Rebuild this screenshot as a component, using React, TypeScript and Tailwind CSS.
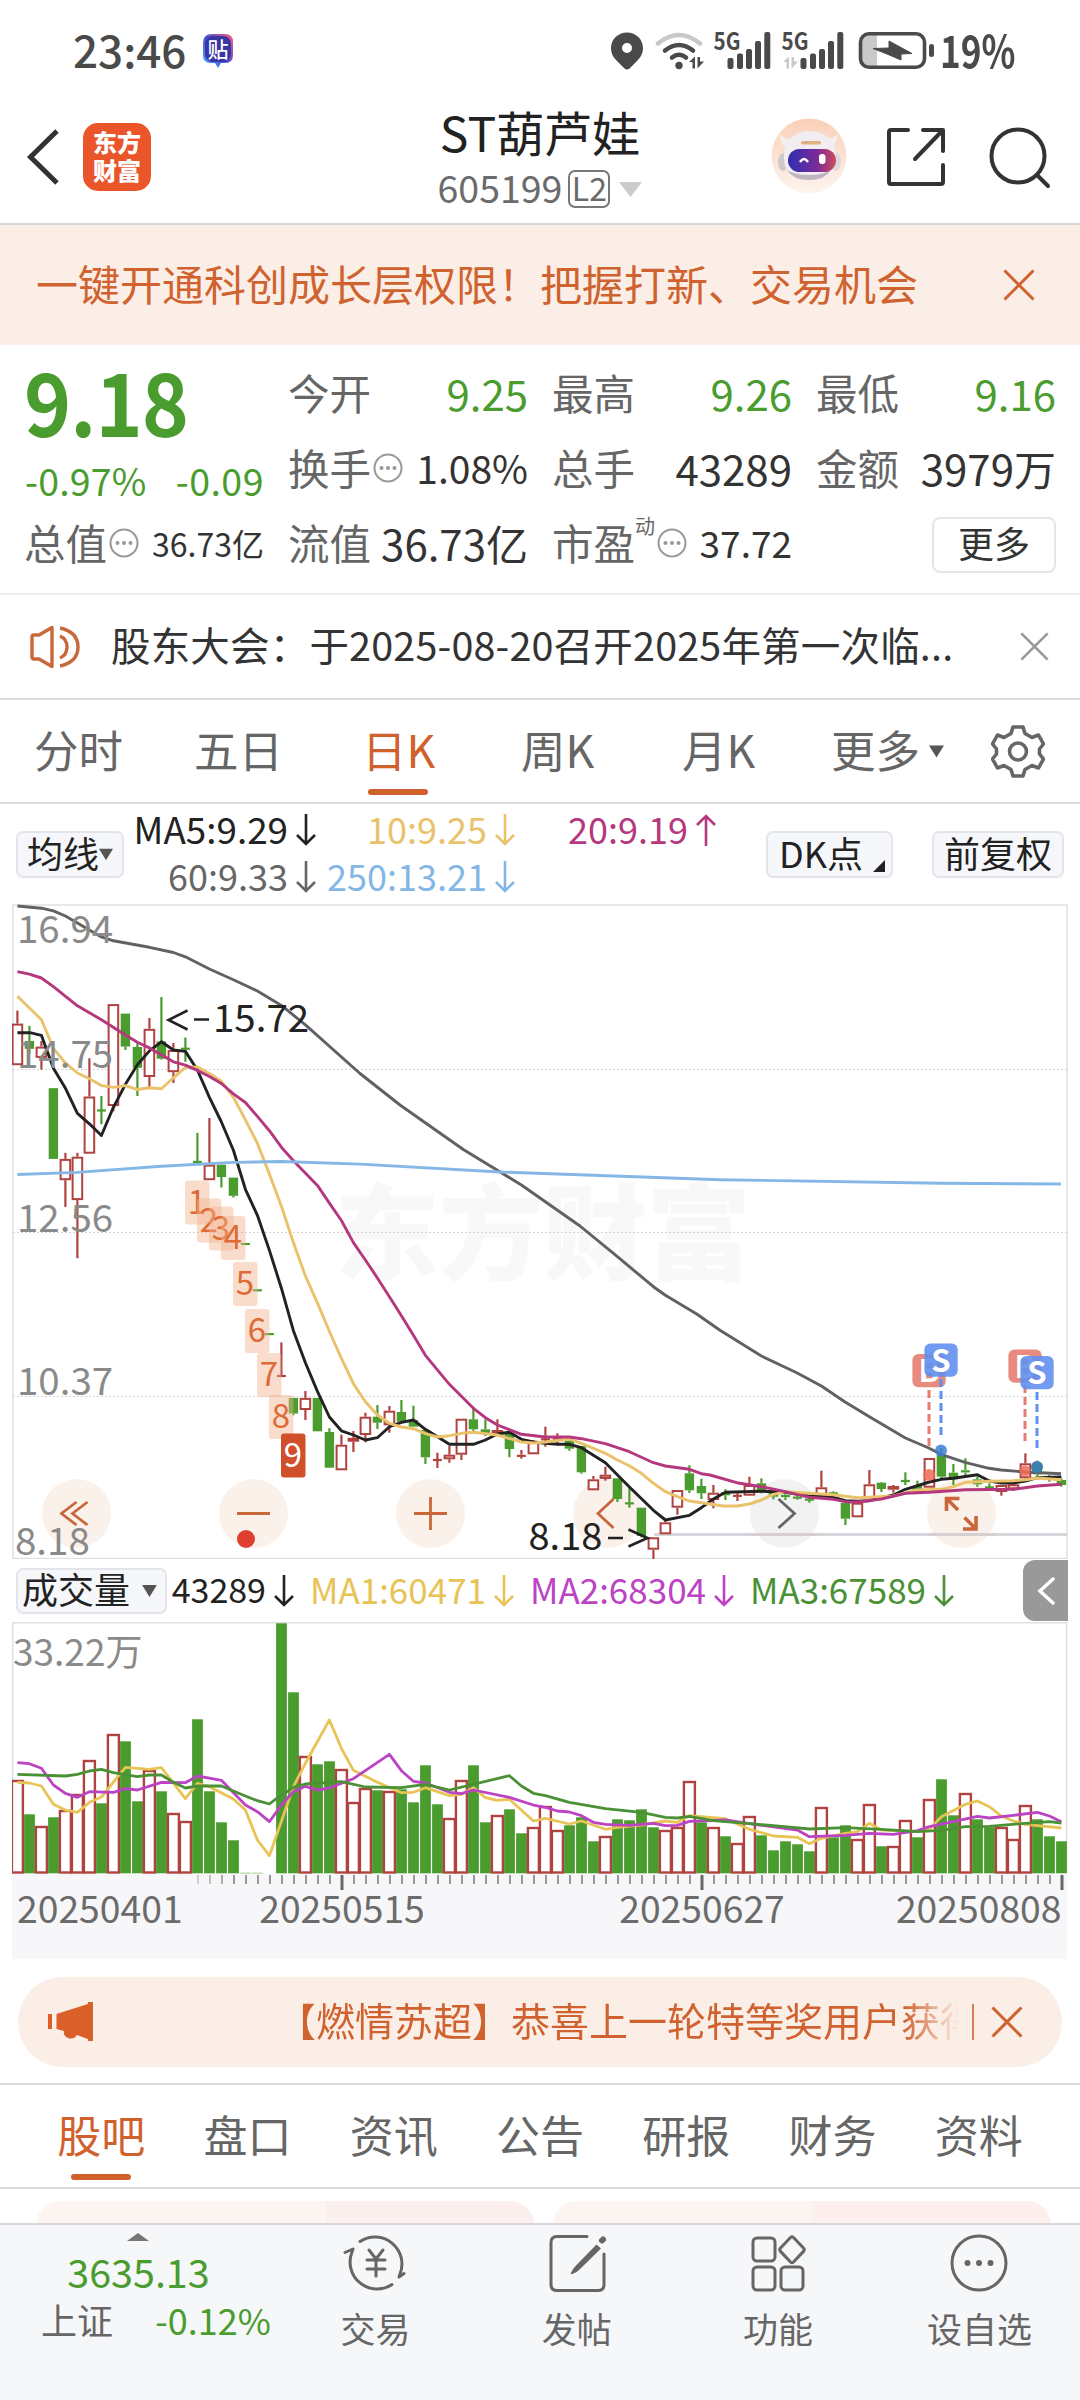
import type { ReactNode } from "react";

type Point = [number, number];

const GREEN = "#4a9c2f";
const RED = "#b04340";

// Candle slots are 12px apart, the first one centred at x = 17.4
const slotX = (i: number) => 17.4 + i * 12;

// [up, high, bodyTop, bodyBottom, low]
const candles: [number, number, number, number, number][] = [
  [1, 1010.6, 1023.6, 1065.2, 1065.2], [0, 1025.8, 1041, 1048.8, 1054], [1, 1041, 1046.6, 1057.9, 1069.6],
  [0, 1088.2, 1088.2, 1158.9, 1158.9], [1, 1152.8, 1158.9, 1180.2, 1207], [1, 1152.8, 1156.7, 1200.1, 1258.2],
  [1, 1058.3, 1096.5, 1153.7, 1153.7], [0, 1096, 1110, 1111, 1124.2], [1, 1004.1, 1004.1, 1106, 1111.2],
  [0, 1013.6, 1013.6, 1046.6, 1050], [0, 1043, 1047, 1067.8, 1096], [1, 1018, 1028.8, 1077, 1087.4],
  [0, 997, 1041.4, 1058.7, 1059.6], [1, 1043, 1050, 1072.2, 1083], [0, 1037.5, 1048.3, 1049.2, 1061.8],
  [0, 1132.9, 1161, 1162.8, 1162.8], [1, 1118, 1164.6, 1180.2, 1180.2], [0, 1164.6, 1164.6, 1177, 1187.5],
  [0, 1177.6, 1177.6, 1195.8, 1197.5], [0, 1243, 1243.3, 1244.7, 1245], [0, 1289.5, 1289.6, 1291, 1291],
  [0, 1333.4, 1333.4, 1334.8, 1334.8], [1, 1342.4, 1375.3, 1376.7, 1376.7], [0, 1397.9, 1397.9, 1413.5, 1415.2],
  [1, 1391, 1397.9, 1410, 1420], [0, 1397.9, 1397.9, 1431.3, 1431.3], [0, 1428.2, 1432, 1467.7, 1467.7],
  [1, 1434.7, 1444.7, 1470.3, 1470.3], [1, 1431, 1437.8, 1441.7, 1452], [1, 1412.7, 1416.7, 1435, 1442.3],
  [0, 1405, 1416.7, 1422.7, 1429], [1, 1406, 1410.7, 1425.3, 1432.7], [0, 1400, 1412, 1421.7, 1423.3],
  [0, 1405.7, 1420, 1426.7, 1426.7], [0, 1430, 1430, 1457.3, 1464], [1, 1452.7, 1459.7, 1460.3, 1468],
  [1, 1446, 1454.7, 1459.3, 1462.7], [1, 1418.7, 1418.7, 1454.7, 1460], [0, 1406.7, 1419.3, 1429.3, 1433.3],
  [0, 1419.3, 1429.3, 1433.3, 1436], [1, 1419.3, 1430, 1434, 1435], [0, 1433.3, 1433.3, 1449, 1457.3],
  [1, 1450, 1454.7, 1457, 1458.7], [1, 1440, 1442, 1454.3, 1454.3], [1, 1426.7, 1439, 1439.7, 1446.7],
  [1, 1433.3, 1438.7, 1439.3, 1445], [0, 1440, 1440.7, 1448.7, 1450.7], [0, 1446, 1446, 1472.3, 1473.7],
  [1, 1476, 1479.3, 1490.3, 1490.3], [1, 1466.7, 1474.7, 1479, 1480.7], [0, 1478.3, 1478.3, 1499, 1502],
  [0, 1488.3, 1502.7, 1504, 1507.7], [0, 1507.7, 1507.7, 1536, 1537.3], [1, 1537.3, 1537.3, 1549.7, 1560],
  [1, 1520.7, 1522.3, 1534.3, 1534.3], [1, 1490, 1490, 1507.7, 1514.7], [0, 1465.3, 1473.3, 1490.3, 1493],
  [0, 1478.7, 1486, 1493.3, 1499], [1, 1485, 1492.7, 1500, 1508.3], [0, 1489.3, 1492.3, 1495.3, 1500],
  [1, 1493.3, 1495, 1496.7, 1501], [1, 1476.7, 1485, 1495.7, 1495.7], [0, 1478.3, 1483.3, 1490.7, 1493.3],
  [0, 1490, 1492.7, 1496.7, 1499.3], [0, 1492.7, 1494.7, 1497.3, 1500], [0, 1493.3, 1496.7, 1498.7, 1499.7],
  [0, 1496.7, 1499, 1500.3, 1502.7], [1, 1470.7, 1487.3, 1496.7, 1496.7], [0, 1491.3, 1492.7, 1494, 1496],
  [0, 1501.7, 1502.7, 1518.7, 1525], [1, 1502.7, 1502.7, 1517.3, 1517.3], [1, 1470, 1484.3, 1498.3, 1498.3],
  [0, 1482, 1482.7, 1489, 1492], [1, 1485, 1486, 1489.7, 1492.7], [0, 1472.3, 1480, 1482, 1485],
  [0, 1480.7, 1486, 1492, 1492], [1, 1458, 1458, 1487.7, 1487.7], [0, 1448, 1455, 1476.7, 1478.3],
  [0, 1464, 1472.7, 1479.3, 1485], [0, 1458.3, 1470, 1472.7, 1475], [0, 1476.7, 1479.3, 1484.3, 1486.7],
  [0, 1483.3, 1486.7, 1488, 1490.7], [1, 1485, 1485, 1492, 1495.7], [1, 1483.3, 1484.3, 1489.3, 1490.7],
  [1, 1453.3, 1463.3, 1478.3, 1481.7], [0, 1460.7, 1463.3, 1474.3, 1476.7], [0, 1475, 1476.7, 1480, 1481.7],
  [0, 1478.3, 1480, 1485, 1486.7],
];

const priceLines = [
  {
    color: "#616161",
    points:
      "17.4,906 41.4,908.2 53.4,910.8 65.4,916 101.4,936.9 113.4,940.8 149.4,947.3 173.4,952.5 185.4,956.8 209.4,969 233.4,979.8 257.4,991 281.4,1005.4 305.4,1024.9 360,1073.5 400,1105 463.3,1149.5 521.4,1185 580,1226 617.4,1256.7 653.4,1286.7 665.4,1295.3 696.7,1314 720,1330.3 761.4,1356 796.7,1372.7 821.4,1386 844.7,1401.7 869.4,1416.7 905.4,1438 928.7,1448 941,1454.3 965,1462.3 989,1468.3 1001,1470 1025,1472 1061,1473.7",
  },
  {
    color: "#222",
    points:
      "17.4,1032.7 30,1032.7 41.4,1035.3 53.4,1068.3 65,1087.4 77.4,1113.4 89.4,1123.8 101.4,1135.5 113.4,1107.3 125.4,1084.3 137.4,1064.8 149.4,1050.9 161.4,1041.8 173.4,1050 185.4,1051.4 197.4,1070 209.4,1097.3 221.4,1122 233.4,1150.2 245.4,1189.3 257.4,1215.3 269.4,1250.4 281.4,1288.2 293.4,1330.7 305.4,1362.8 317.4,1391.4 329.4,1417 341.4,1430.8 353.4,1435 365.4,1440 377.4,1437.7 389.4,1426.7 401.4,1422.3 413.4,1420 425.4,1429.3 437.4,1436.7 449.4,1444.3 473.4,1444.3 485.4,1440 497.4,1434 509.4,1432.3 521.4,1439.3 533.4,1442 545.4,1443.3 557.4,1444.3 569.4,1444.3 581.4,1447.7 605.4,1462.7 629.4,1487 653.4,1510.3 665.4,1520 689.4,1515.3 701.4,1507.7 713.4,1499 725.4,1492.3 761.4,1491.3 785.4,1492.3 809.4,1496 833.4,1497.3 845.4,1500.7 857.4,1501.3 869.4,1500.7 893.4,1495 905.4,1489.3 929.4,1482 941.4,1479.3 953.4,1478.3 977.4,1474.7 989.4,1481 1001.4,1483 1013.4,1483 1025.4,1481 1037.4,1477.7 1061.4,1477",
  },
  {
    color: "#e9c26b",
    points:
      "17.4,996.3 41.4,1019.7 53.4,1048.3 65,1062.6 77.4,1073 89.4,1078.7 101.4,1085.6 113.4,1087.4 125.4,1085.6 137.4,1089.5 149.4,1087.8 161.4,1088.7 173.4,1077.8 185.4,1067.4 197.4,1067 209.4,1073.5 221.4,1081.3 233.4,1097.3 245.4,1119.9 257.4,1143.3 269.4,1174.1 281.4,1206.2 293.4,1242.6 305.4,1276 317.4,1302.9 329.4,1331.5 341.4,1358.4 353.4,1383.6 365.4,1401.7 377.4,1415 389.4,1423.3 401.4,1427 413.4,1428.7 425.4,1433.7 437.4,1437 449.4,1435.7 461.4,1433.3 473.4,1432.3 497.4,1435 521.4,1442 533.4,1443 545.4,1442 569.4,1439 581.4,1443.3 605.4,1453.3 617.4,1460 629.4,1465.7 641.4,1473.3 653.4,1483.3 665.4,1491.7 677.4,1496.7 689.4,1501 701.4,1502.7 723.4,1506 737.4,1506 749.4,1504 761.4,1500 773.4,1494.3 785.4,1491.7 809.4,1493.3 833.4,1494.7 857.4,1497.7 869.4,1497.3 893.4,1496 917.4,1490 941.4,1489.3 953.4,1486.7 965.4,1482.3 989.4,1481.3 1013.4,1480.7 1025.4,1479.7 1037.4,1478 1061.4,1479.7",
  },
  {
    color: "#b5387f",
    points:
      "17.4,971.6 29.4,974.2 41.4,978 53.4,986.7 77.4,1005.8 101.4,1019.7 125.4,1034.9 137.4,1042.3 149.4,1047.9 173.4,1061.8 185.4,1065.2 197.4,1070.4 209.4,1076.5 221.4,1083.5 233.4,1093.9 245.4,1102.5 257.4,1116.4 269.4,1130.7 281.4,1147.2 293.4,1160.7 317.4,1185.4 329.4,1203.1 341.4,1220.5 353.4,1242.6 365.4,1260 377.4,1278 389.4,1296.7 401.4,1315.7 413.4,1335.3 425.4,1355.3 449.4,1384.3 473.4,1408.3 485.4,1417.7 497.4,1425 521.4,1434.3 545.4,1437 569.4,1437 581.4,1438.7 605.4,1443.7 629.4,1451.7 653.4,1462.7 665.4,1466 689.4,1469.3 701.4,1473.7 710,1475 736.7,1482.7 761.4,1486.7 785.4,1491.7 809.4,1497.3 833.4,1499.3 845.4,1501.7 857.4,1502 881.4,1499 905.4,1493.3 929.4,1492.3 965.4,1489.7 1013.4,1489.3 1037.4,1486 1061.4,1484.3",
  },
  {
    color: "#84b7e6",
    points:
      "17.4,1174.5 77,1172.4 161.4,1166.3 233.4,1162.4 281.4,1161.5 360,1164.1 500,1172 720,1179.7 941,1183.3 1061,1184",
  },
];

const volumes = [
  93, 59, 47, 56, 63, 79, 113, 70, 139, 132, 72, 103, 82, 60, 52, 154, 82, 51, 33, 0.5, 0.5, 0, 250, 181, 117, 109,
  112, 104, 71, 85, 83, 82, 84, 71, 108, 69, 55, 93, 108, 51, 58, 64, 40, 46, 67, 43, 48, 56, 32, 37, 54, 53, 64, 46,
  43, 46, 92, 51, 46, 37, 30, 57, 38, 23, 32, 29, 22, 66, 36, 48, 34, 69, 27, 27, 53, 36, 74, 94, 58, 80, 54, 46, 46,
  34, 68, 54, 37, 32,
];
const upVolumes = new Set([
  0, 2, 4, 5, 6, 8, 11, 13, 14, 24, 27, 28, 29, 31, 36, 37, 40, 43, 44, 45, 49, 54, 55, 56, 58, 60, 61, 67, 70, 71, 73,
  74, 76, 79, 82, 83, 84,
]);

const volumeLines: { color: string; points: Point[] }[] = [
  {
    color: "#e8c355",
    points: [
      [0, 1782.3], [1, 1783], [2, 1786], [3, 1804.3], [4, 1810], [5, 1812.3], [6, 1802.3], [7, 1797], [9, 1767.3],
      [11, 1769.3], [12, 1767.7], [14, 1798.7], [15, 1783.3], [16, 1786.7], [18, 1799], [19, 1810], [20, 1840],
      [21, 1855.7], [23, 1786.7], [24, 1763.3], [26, 1720], [27, 1748.3], [28, 1770.3], [30, 1782.3], [32, 1792.7],
      [33, 1792.3], [34, 1787.7], [36, 1795.7], [37, 1794.3], [38, 1787.7], [39, 1797.7], [40, 1800.3], [41, 1799.3],
      [43, 1821], [44, 1818.3], [46, 1824], [47, 1821], [49, 1829.3], [50, 1827.3], [52, 1825], [54, 1821],
      [55, 1822.3], [56, 1815.7], [58, 1817.7], [59, 1818.7], [61, 1829.3], [63, 1836], [65, 1837.3], [66, 1843.7],
      [67, 1838.3], [69, 1833.3], [70, 1831.7], [71, 1823.3], [72, 1830], [75, 1831.7], [76, 1829], [77, 1816.7],
      [79, 1804.3], [80, 1801], [81, 1806.7], [82, 1816], [83, 1821], [84, 1824.3], [87, 1828],
    ],
  },
  {
    color: "#bb43c4",
    points: [
      [0, 1762.7], [1, 1763.7], [2, 1768.3], [3, 1785], [4, 1793.3], [5, 1797.3], [6, 1791.7], [8, 1792.3],
      [9, 1788.7], [10, 1790], [12, 1782.3], [14, 1782.7], [15, 1776], [17, 1780.3], [19, 1805], [20, 1811.7],
      [21, 1821.7], [22, 1805], [23, 1791.7], [24, 1786.3], [25, 1790], [26, 1788], [28, 1778.7], [31, 1754.3],
      [32, 1770.7], [33, 1781.3], [34, 1783], [36, 1792.3], [37, 1793.7], [38, 1790], [41, 1797.3], [43, 1805],
      [44, 1807.3], [45, 1811], [46, 1812], [47, 1815.7], [48, 1822.3], [49, 1824.3], [51, 1825.3], [53, 1823.3],
      [54, 1825.7], [55, 1825.3], [56, 1821.3], [59, 1820], [62, 1825.3], [65, 1830], [66, 1836.7], [69, 1835.3],
      [71, 1833.3], [73, 1834.3], [75, 1830.7], [76, 1826.7], [78, 1821.7], [80, 1816.3], [81, 1818], [83, 1815.3],
      [85, 1812.3], [86, 1816], [87, 1821.7],
    ],
  },
  {
    color: "#4a9136",
    points: [
      [0, 1774.3], [4, 1776], [5, 1774.3], [6, 1771], [7, 1769.3], [8, 1772.7], [10, 1776.7], [11, 1775], [12, 1775],
      [13, 1782.3], [14, 1788], [15, 1786], [17, 1786], [19, 1796], [20, 1800.7], [21, 1804], [21.5, 1799.3],
      [23, 1787.3], [24, 1784], [27, 1781.7], [29, 1787], [32, 1787.7], [34, 1784.3], [36, 1790], [41, 1775.7],
      [42, 1786], [43, 1793.3], [44, 1795.7], [46, 1802.3], [49, 1808.7], [52, 1812.3], [54, 1817.3], [55, 1818],
      [56, 1816.3], [58, 1820.7], [61, 1823.7], [63, 1825.7], [66, 1829], [69, 1827.7], [72, 1829.3], [75, 1831.7],
      [77, 1830.3], [79, 1826.7], [81, 1826.3], [84, 1823.3], [86, 1821.7], [87, 1823],
    ],
  },
];

// Nine-turn sequence markers: top left corner of each tag
const sequence: Point[] = [
  [185, 1180.5], [197, 1198.5], [209, 1206.5], [221, 1216], [233, 1262], [245, 1309], [257, 1353], [269, 1395],
  [281, 1433.5],
];

function StatusBar() {
  return (
    <div className="flex h-[102px] items-center pl-[73px] text-[#4a4a4a]">
      <span className="relative -top-0.5 text-[44px] leading-none font-medium">23:46</span>
      <svg className="ml-[16px] h-[36px] w-[32px]" viewBox="0 0 32 36">
        <defs>
          <linearGradient id="tie" x1="0" y1="1" x2="1" y2="0">
            <stop offset="0" stopColor="#38b4ff" />
            <stop offset="0.5" stopColor="#4a4fd0" />
            <stop offset="1" stopColor="#ff5d7a" />
          </linearGradient>
        </defs>
        <path d="M10 1h13q8 0 8 8v13q0 8-8 8h-4l-3 5-3-5H9q-8 0-8-8V10q0-9 9-9z" fill="url(#tie)" />
        <rect x="3" y="3" width="26" height="26" rx="8" fill="#3a35a5" />
        <text x="16" y="24" fontSize="21" fontWeight="500" textAnchor="middle" fill="#fff">
          贴
        </text>
      </svg>
      <svg className="ml-[375px] h-[40px] w-[326px]" viewBox="610 31 326 40">
        <g fill="#4a4a4a">
          <path fillRule="evenodd" d="M628 32.5c9 0 16 7 16 15.500 0 6-3 10-6 13l-7.500 7.500q-2.500 2.200-5 0L618 61c-3-3-6-7-6-13 0-8.500 7-15.500 16-15.500zm0 10.500a5 5 0 1 0 0 10 5 5 0 0 0 0-10z" />
          <circle cx="680" cy="65.500" r="3.700" />
          <path d="M690 62l6-5.500v12h-2.500V62zM698.500 57h2.500v4.500h4l-6.500 7z" />
          <rect x="728.500" y="58" width="6" height="11" rx="2" />
          <rect x="738" y="53.500" width="6" height="15.500" rx="2" />
          <rect x="747" y="49" width="6" height="20" rx="2" />
          <rect x="756" y="41" width="6" height="28" rx="2" />
          <rect x="765.300" y="32" width="6" height="37" rx="2" />
          <rect x="801.500" y="58" width="6" height="11" rx="2" />
          <rect x="811" y="53.500" width="6" height="15.500" rx="2" />
          <rect x="820" y="49" width="6" height="20" rx="2" />
          <rect x="829" y="41" width="6" height="28" rx="2" />
          <rect x="838.300" y="32" width="6" height="37" rx="2" />
          <text x="714.500" y="50" fontSize="24" fontWeight="700" textLength="27" lengthAdjust="spacingAndGlyphs">5G</text>
          <text x="782.500" y="50" fontSize="24" fontWeight="700" textLength="27" lengthAdjust="spacingAndGlyphs">5G</text>
          <rect x="930" y="44" width="5" height="13" rx="2.500" />
        </g>
        <g fill="none" strokeWidth="4.500" strokeLinecap="round">
          <path d="M659 43.500q21-17 42 0" stroke="#c9c9c9" />
          <path d="M666 50.500q14-11 28 0" stroke="#4a4a4a" />
          <path d="M673 57.500q7-5.500 14 0" stroke="#4a4a4a" />
        </g>
        <path d="M784 62l6-5.500v12h-2.500V62zM792.500 57h2.500v4.500h4l-6.500 7z" fill="#c9c9c9" />
        <path d="M863 35h15v31h-15z" fill="#c9c9c9" />
        <rect x="861.500" y="33.700" width="64" height="33.600" rx="8.500" fill="none" stroke="#4a4a4a" strokeWidth="3.600" />
        <path d="M874 48.500l16-0.500v-7l23 12.500-11 .5v6l-14-6z" fill="#4a4a4a" stroke="#4a4a4a" strokeLinejoin="round" />
      </svg>
      <span className="relative -top-0.5 ml-[5px] origin-left scale-x-[0.8] text-[44px] leading-none font-bold">19%</span>
    </div>
  );
}

function Header() {
  return (
    <header className="relative flex h-[123px] items-center border-b-2 border-[#d6d6d9] pl-[26px]">
      <svg className="mt-[-12px] h-[58px] w-[34px]" viewBox="0 0 34 58" fill="none" stroke="#333" strokeWidth="5">
        <path d="M31 3L4.500 29 31 55" />
      </svg>
      <div className="mt-[-12px] ml-[23px] flex h-[68px] w-[68px] flex-col items-center justify-center rounded-[15px] bg-[#ea5529] text-[24px] leading-[28px] font-black text-white">
        <span className="-mt-0.5">东方</span>
        <span>财富</span>
      </div>
      <div className="absolute inset-x-0 top-0 flex flex-col items-center">
        <h1 className="mt-[5px] text-[48px] leading-none text-[#222]">ST葫芦娃</h1>
        <div className="mt-[15px] flex items-center text-[37.500px] leading-none text-[#6b6b6b]">
          <span className="relative -top-0.5">605199</span>
          <span className="ml-[6px] flex h-[38px] w-[42px] items-center justify-center rounded-[7px] border-2 border-[#777] pb-1 text-[32px]">L2</span>
          <svg className="ml-[9px] h-[15px] w-[23px]" viewBox="0 0 23 15">
            <path d="M0 0h23L11.500 15z" fill="#ccc" />
          </svg>
        </div>
      </div>
      <svg className="mt-[-13px] ml-[620px] h-[76px] w-[76px]" viewBox="0 0 76 76">
        <defs>
          <linearGradient id="halo" x1="0" y1="0" x2="0" y2="1">
            <stop offset="0" stopColor="#fad0b8" />
            <stop offset="1" stopColor="#fdf4ef" />
          </linearGradient>
          <linearGradient id="visor">
            <stop offset="0" stopColor="#2f2fb0" />
            <stop offset="0.600" stopColor="#7a2a9a" />
            <stop offset="1" stopColor="#d04a5c" />
          </linearGradient>
        </defs>
        <circle cx="38" cy="38" r="37.500" fill="url(#halo)" />
        <path d="M9 16q0 9 5 13l7-7q-9-1-12-6zM67 15q-1 9-5 13l-8-7q10 0 13-6z" fill="#f5efee" />
        <ellipse cx="12" cy="44" rx="5" ry="9" fill="#cfc8cc" />
        <ellipse cx="65" cy="44" rx="5" ry="9" fill="#ddd6da" />
        <path d="M13 40q0-26 25-27 27 1 27 27 0 21-27 22-25-1-25-22z" fill="#f1edf0" />
        <path d="M16 52q6 10 22 10t22-10q-8 5-22 5t-22-5z" fill="#bdb6c1" />
        <rect x="17" y="31" width="48" height="23" rx="11.500" fill="url(#visor)" />
        <rect x="30" y="23" width="20" height="3.500" rx="1.700" fill="#dfb184" />
        <path d="M29 44q4-6 8 0" stroke="#fff" strokeWidth="2.500" fill="none" />
        <rect x="48" y="36" width="6.500" height="10" rx="3" fill="#fff" />
      </svg>
      <svg className="mt-[-12px] ml-[39px] h-[60px] w-[60px]" viewBox="0 0 60 60" fill="none" stroke="#333" strokeWidth="4" strokeLinecap="round" strokeLinejoin="round">
        <path d="M22 3H5q-2 0-2 2v50q0 2 2 2h50q2 0 2-2V38" />
        <path d="M37 3h20v21M56 4L29 32" />
      </svg>
      <svg className="mt-[-9px] ml-[43px] h-[62px] w-[62px]" viewBox="0 0 62 62" fill="none" stroke="#333" strokeWidth="4" strokeLinecap="round">
        <circle cx="29" cy="29" r="26.500" />
        <path d="M48.500 48.500L59 59" />
      </svg>
    </header>
  );
}

function Cross({ className }: { className: string }) {
  return (
    <svg className={className} viewBox="0 0 32 32" fill="none" stroke="currentColor" strokeWidth="3">
      <path d="M1.500 1.500l29 29M30.500 1.500l-29 29" />
    </svg>
  );
}

function MoreDots() {
  return (
    <svg className="ml-[2px] h-[30px] w-[30px] shrink-0" viewBox="0 0 30 30">
      <circle cx="15" cy="15" r="13.500" fill="none" stroke="#999" strokeWidth="2" />
      <g fill="#999">
        <circle cx="8.500" cy="15" r="2" />
        <circle cx="15" cy="15" r="2" />
        <circle cx="21.500" cy="15" r="2" />
      </g>
    </svg>
  );
}

function Quote({ label, children, icon, sup }: { label: string; children: ReactNode; icon?: boolean; sup?: string }) {
  return (
    <div className="relative flex items-center justify-between pb-1 text-[42px] leading-none whitespace-nowrap">
      <span className="-ml-0.5 flex items-center text-[41.500px] text-[#666]">
        {label}
        {sup && <sup className="relative -top-[17px] ml-0 w-[20px] text-[20px] leading-none">{sup}</sup>}
        {icon && <MoreDots />}
      </span>
      {children}
    </div>
  );
}

function QuotePanel() {
  return (
    <section className="grid h-[250px] grid-cols-4 grid-rows-[75px_75px_75px] gap-x-[26px] border-b-2 border-[#eee] pt-[12px] pr-6 pl-[26px] text-[#333]">
      <div className="row-span-2 text-[#4a9c2f]">
        <div className="-mt-px ml-[-2px] origin-left scale-x-[0.92] text-[87px] leading-none font-bold tracking-[-1px]">9.18</div>
        <div className="mt-[18px] flex justify-between text-[37.500px] leading-none">
          <span className="-ml-px tracking-[0.2px]">-0.97%</span>
          <span className="tracking-[0.5px]">-0.09</span>
        </div>
      </div>
      <Quote label="今开"><span className="text-[#4a9c2f]">9.25</span></Quote>
      <Quote label="最高"><span className="text-[#4a9c2f]">9.26</span></Quote>
      <Quote label="最低"><span className="text-[#4a9c2f]">9.16</span></Quote>
      <Quote label="换手" icon><span className="text-[39px]">1.08%</span></Quote>
      <Quote label="总手"><span>43289</span></Quote>
      <Quote label="金额"><span>3979万</span></Quote>
      <Quote label="总值" icon><span className="text-[32px]">36.73亿</span></Quote>
      <Quote label="流值"><span>36.73亿</span></Quote>
      <Quote label="市盈" icon sup="动"><span className="text-[37px]">37.72</span></Quote>
      <div className="flex items-center justify-end">
        <button className="h-[56px] w-[124px] rounded-lg border-2 border-[#e6e6e6] pb-1.5 text-[36px] leading-none">更多</button>
      </div>
    </section>
  );
}

function Notice() {
  return (
    <div className="flex h-[105px] items-center border-b-2 border-[#d9d9d9] pr-[31px] pl-[29px]">
      <svg className="h-[44px] w-[52px]" viewBox="0 0 52 44" fill="none" stroke="#c9673a" strokeWidth="3.400">
        <path d="M3 12q0-2 2-2h5L23 2.500v39L10 34H5q-2 0-2-2z" strokeLinejoin="round" />
        <path d="M31 11q7 3 7 11t-7 11" />
        <path d="M31 3q18 4 18 19T31 41" />
      </svg>
      <p className="ml-[30px] pb-1.5 text-[39.500px] leading-none tracking-[0.180px] whitespace-nowrap text-[#333]">
        股东大会：于2025-08-20召开2025年第一次临...
      </p>
      <Cross className="ml-auto h-[29px] w-[29px] text-[#999]" />
    </div>
  );
}

function Caret({ className }: { className: string }) {
  return (
    <svg className={className} viewBox="0 0 16 13">
      <path d="M0 0h16L8 13z" fill="#555" />
    </svg>
  );
}

function PeriodTabs() {
  return (
    <nav className="flex h-[104px] items-center border-b-2 border-[#d9d9d9] pl-[34px] text-[44.500px] leading-none whitespace-nowrap text-[#666]">
      <span className="w-[160px] pb-1">分时</span>
      <span className="w-[168px] pb-1">五日</span>
      <span className="relative w-[159px] pb-1 text-[#d0612d]">
        日K
        <i className="absolute top-[62px] left-[6px] h-[6px] w-[60px] rounded-full bg-[#d0612d]" />
      </span>
      <span className="w-[161px] pb-1">周K</span>
      <span className="w-[149px] pb-1">月K</span>
      <span className="pb-1">更多</span>
      <Caret className="ml-[9px] h-[13px] w-[15px]" />
      <svg className="ml-[47px] h-[54px] w-[54px]" viewBox="0 0 54 54" fill="none" stroke="#666" strokeWidth="3.600" strokeLinejoin="round">
        <path d="M22 3h10l2 6.500 7 4 6.500-2.500 5 9-4 5v5l4 5-5 9-6.500-2.500-7 4-2 6.500H22l-2-6.500-7-4L6.500 44l-5-9 4-5v-5l-4-5 5-9 6.500 2.500 7-4z" />
        <circle cx="27" cy="27.500" r="8.500" />
      </svg>
    </nav>
  );
}

function Arrow({ up }: { up?: boolean }) {
  return (
    <svg className="ml-[8px] h-[32px] w-[20px] shrink-0" viewBox="0 0 20 32" fill="none" stroke="currentColor" strokeWidth="2.600">
      <path d={up ? "M10 32V2M1 11l9-9 9 9" : "M10 0v30M1 21l9 9 9-9"} />
    </svg>
  );
}

function Stat({ children, up }: { children: ReactNode; up?: boolean }) {
  return (
    <span className="flex items-center justify-end whitespace-nowrap">
      <span className="relative -top-0.5">{children}</span>
      <Arrow up={up} />
    </span>
  );
}

function AverageBar() {
  return (
    <div className="relative flex h-[100px] items-start pl-4 text-[36px] leading-none text-[#222]">
      <button className="mt-[27px] flex h-[47px] w-[108px] items-center justify-center rounded-[7px] border-2 border-[#e4e5ea] bg-[#f6f7fa]">
        <span className="relative -top-[3px]">均线</span>
        <Caret className="h-[13px] w-[14px]" />
      </button>
      <div className="mt-[8px] grid grid-cols-[192px_199px_201px] grid-rows-[35px_35px] gap-y-[12px]">
        <span className="text-[36.800px]"><Stat>MA5:9.29</Stat></span>
        <span className="text-[#e9c26b]"><Stat>10:9.25</Stat></span>
        <span className="text-[#b5387f]"><Stat up>20:9.19</Stat></span>
        <span className="text-[#666]"><Stat>60:9.33</Stat></span>
        <span className="text-[#84b7e6]"><Stat>250:13.21</Stat></span>
      </div>
      <button className="mt-[27px] ml-[50px] flex h-[47px] w-[127px] items-center rounded-[7px] border-2 border-[#e4e5ea] bg-[#f6f7fa] pl-[11px]">
        <span className="relative -top-[3px]">DK点</span>
        <svg className="mt-[22px] ml-[10px] h-[12px] w-[12px]" viewBox="0 0 12 12"><path d="M12 0v12H0z" fill="#222" /></svg>
      </button>
      <button className="mt-[27px] ml-[39px] h-[47px] w-[132px] rounded-[7px] border-2 border-[#e4e5ea] bg-[#f6f7fa] pb-1.5">前复权</button>
    </div>
  );
}

function Candle({ i, data }: { i: number; data: (typeof candles)[number] }) {
  const [up, high, top, bottom, low] = data;
  const x = slotX(i);
  const thin = bottom - top < 3;
  return (
    <g stroke={up ? RED : GREEN} strokeWidth="2.200">
      {high < top && <path d={`M${x} ${high}V${top}`} />}
      {low > bottom && <path d={`M${x} ${bottom}V${low}`} />}
      {thin && <path d={`M${x - 4.500} ${(top + bottom) / 2}h9`} />}
      {!thin && up === 1 && <rect x={x - 4.800} y={top + 1} width="9.600" height={bottom - top - 2} fill="#fff" strokeWidth="2" />}
      {!thin && up === 0 && <rect x={x - 4.700} y={top} width="9.400" height={bottom - top} fill={GREEN} stroke="none" />}
    </g>
  );
}

function Badge({ x, y, letter, color, to, dashFrom }: { x: number; y: number; letter: string; color: string; to: number; dashFrom: number }) {
  return (
    <g>
      <path d={`M${x} ${dashFrom}V${to}`} stroke={color} strokeWidth="3" strokeDasharray="8 4" />
      <rect x={x - 16.600} y={y} width="33.300" height="33.300" rx="6" fill={color} fillOpacity="0.900" />
      <text x={x} y={y + 28} fontSize="31" fontWeight="700" textAnchor="middle" fill="#fff">
        {letter}
      </text>
    </g>
  );
}

function PriceChart() {
  return (
    <svg className="mx-3 block h-[655px] w-[1056px]" viewBox="12 904 1056 655">
      <rect x="13" y="905" width="1054" height="653.500" fill="#fff" stroke="#dfdfdf" strokeWidth="1.500" />
      <text x="335" y="1272" fontSize="104" fontWeight="900" fill="#f8f8f8">东方财富</text>
      <g stroke="#d4d4d4" strokeDasharray="2 2">
        <path d="M13 1069.500H1067M13 1232.500H1067M13 1396.500H1067" />
      </g>
      <path d="M654 1534.500h413" stroke="#d5d6db" strokeWidth="3" />
      {[76.500, 253.500, 430.500, 607.500, 784.500, 961.500].map((cx, i) => (
        <circle key={cx} cx={cx} cy="1513.500" r="34.500" fill={i === 4 ? "#f2f2f2" : "#fbf1eb"} />
      ))}
      <path d="M751 1534.500h67M928 1534.500h67" stroke="#d5cfd0" strokeWidth="3" />
      <g fill="none" stroke="#c9663a" strokeWidth="2.800">
        <path d="M76.500 1502l-15 11.500 15 11.500M87.500 1502l-15 11.500 15 11.500" />
        <path d="M237 1513.500h33M414 1513.500h33M430.500 1497v33" />
        <path d="M613.500 1499l-15.500 14.500 15.500 14.500" />
        <path d="M778.500 1499l16 14.500-16 14.500" stroke="#666" />
        <path d="M946.500 1511v-12.500h13M947 1499l11 11M963 1529h13v-13M975.500 1528.500l-11-11" strokeWidth="3.600" />
      </g>
      {candles.map((data, i) => (
        <Candle key={i} i={i} data={data} />
      ))}
      <g fontSize="33" textAnchor="middle">
        {sequence.map(([x, y], i) => {
          const last = i === sequence.length - 1;
          return (
            <g key={i}>
              <rect x={x} y={y} width="24.500" height="44" rx="3" fill={last ? "#d0502c" : "#f2b18f"} fillOpacity={last ? 1 : 0.450} />
              <text x={x + 12} y={y + 33} fill={last ? "#fff" : "#de6a35"}>{i + 1}</text>
            </g>
          );
        })}
      </g>
      {priceLines.map((line) => (
        <polyline key={line.color} points={line.points} fill="none" stroke={line.color} strokeWidth="2.900" strokeLinejoin="round" />
      ))}
      <circle cx="929" cy="1475" r="6" fill="#ef6a58" fillOpacity="0.850" />
      <circle cx="941" cy="1450.500" r="6" fill="#3f7fd6" fillOpacity="0.850" />
      <circle cx="1025" cy="1471" r="5.500" fill="#ef6a58" fillOpacity="0.850" />
      <circle cx="1037" cy="1467" r="6" fill="#3a80b0" />
      <Badge x={929} y={1354} letter="B" color="#e57d6f" dashFrom={1390} to={1447} />
      <Badge x={941} y={1343.500} letter="S" color="#6090f0" dashFrom={1379} to={1436} />
      <Badge x={1025} y={1349.500} letter="B" color="#e57d6f" dashFrom={1385} to={1441} />
      <Badge x={1037} y={1356} letter="S" color="#6090f0" dashFrom={1392} to={1449} />
      <g fontSize="38.500" fill="#8a8a8a">
        <text x="17" y="942.500">16.94</text>
        <text x="17" y="1068">14.75</text>
        <text x="17" y="1232">12.56</text>
        <text x="17" y="1395">10.37</text>
        <text x="15" y="1555">8.18</text>
      </g>
      <circle cx="246" cy="1539" r="9" fill="#de3f30" />
      <g fontSize="38" fill="#222">
        <text x="213" y="1031.500" fontSize="38.500">15.72</text>
        <text x="528.500" y="1550">8.18</text>
        <path d="M187.500 1010.500l-19 9.500 19 9.500M194 1019.500h15M608 1538h15M628.500 1529.500l19 8.500-19 8.500" fill="none" stroke="#222" strokeWidth="2.600" />
      </g>
    </svg>
  );
}

function VolumeBar() {
  return (
    <div className="mr-3 flex h-[63px] items-center pl-4 text-[35px] leading-none text-[#222]">
      <button className="flex h-[46px] w-[151px] items-center rounded-[7px] border-2 border-[#e4e5ea] bg-[#f6f7fa] pl-[4px] text-[36px]">
        <span className="relative -top-[3px]">成交量</span>
        <Caret className="ml-[12px] h-[12px] w-[15px]" />
      </button>
      <div className="flex w-[127px] justify-end text-[34px]"><Stat>43289</Stat></div>
      <div className="flex w-[220px] justify-end text-[#e8c355]"><Stat>MA1:60471</Stat></div>
      <div className="flex w-[220px] justify-end text-[#bb43c4]"><Stat>MA2:68304</Stat></div>
      <div className="flex w-[220px] justify-end text-[#4a9136]"><Stat>MA3:67589</Stat></div>
      <button className="ml-auto flex h-[61px] w-[45px] items-center justify-center rounded-l-[12px] bg-[#999]">
        <svg className="h-[28px] w-[18px]" viewBox="0 0 18 28" fill="none" stroke="#fff" strokeWidth="3.500" strokeLinecap="round">
          <path d="M16 2L3 14l13 12" />
        </svg>
      </button>
    </div>
  );
}

function VolumeChart() {
  return (
    <svg className="mx-3 block h-[337px] w-[1056px]" viewBox="12 1622 1056 337">
      <path d="M12.700 1873V1622.700H1066.500V1873" fill="none" stroke="#dfdfdf" strokeWidth="1.500" />
      <rect x="12" y="1873.500" width="1055" height="85.500" fill="#f7f7fa" />
      <text x="13" y="1665.500" fontSize="37" fill="#8a8a8a">33.22万</text>
      {volumes.map((h, i) =>
        upVolumes.has(i) ? (
          <rect key={i} x={slotX(i) - 5.500} y={1874 - h} width="11" height={h - 1.500} fill="#fff" stroke={RED} strokeWidth="2.400" />
        ) : (
          <rect key={i} x={slotX(i) - 5.300} y={1873.300 - h} width="10.800" height={h} fill={GREEN} />
        ),
      )}
      {volumeLines.map((line) => (
        <polyline
          key={line.color}
          points={line.points.map(([i, y]) => `${slotX(i)},${y}`).join(" ")}
          fill="none"
          stroke={line.color}
          strokeWidth="2.800"
          strokeLinejoin="round"
        />
      ))}
      {volumes.map((_, i) => {
        if (i < 15) return null;
        const major = i === 27 || i === 57 || i === 87;
        return (
          <path
            key={i}
            d={`M${slotX(i) + 0.600} 1875v${major ? 15 : 9}`}
            stroke={major ? "#666" : "#999"}
            strokeOpacity={Math.min(1, (i - 13) / 5)}
            strokeWidth={major ? 3 : 2}
          />
        );
      })}
      <g fontSize="37.300" fill="#6b6b6b">
        <text x="17" y="1922.500">20250401</text>
        <text x="342" y="1922.500" textAnchor="middle">20250515</text>
        <text x="702" y="1922.500" textAnchor="middle">20250627</text>
        <text x="1061.500" y="1922.500" textAnchor="end">20250808</text>
      </g>
    </svg>
  );
}

function Promo() {
  return (
    <div className="mx-[18px] mt-[18px] flex h-[90px] items-center rounded-full bg-[#fbeee6] pr-[39px] pl-[30px] text-[#d0622f]">
      <svg className="h-[40px] w-[46px]" viewBox="0 0 46 40" fill="#da5f28">
        <path d="M0 12h4v15H0zM8.500 12L40 2V0h5v39h-5v-2l-11-4q-3 5-9 3-5-2-4-7L8.500 27z" />
      </svg>
      <div className="ml-[183px] w-[683px] overflow-hidden [mask-image:linear-gradient(to_right,black_92%,transparent)]">
        <p className="pb-1.5 text-[39px] leading-[48px] whitespace-nowrap">【燃情苏超】恭喜上一轮特等奖用户获得</p>
      </div>
      <i className="ml-[13px] h-[36px] w-[2px] bg-[#d0622f]/80" />
      <Cross className="ml-[17px] h-[32px] w-[32px]" />
    </div>
  );
}

const sections = ["股吧", "盘口", "资讯", "公告", "研报", "财务", "资料"];

function SectionTabs() {
  return (
    <nav className="mt-[16px] flex h-[106px] items-center border-y-2 border-[#d9d9dc] px-[28px] text-[44px] leading-none text-[#666]">
      {sections.map((name, i) => (
        <span key={name} className={i === 0 ? "relative flex-1 pb-1 text-center text-[#d0612d]" : "flex-1 pb-1 text-center"}>
          {name}
          {i === 0 && <i className="absolute top-[62px] left-1/2 h-[6px] w-[60px] -translate-x-1/2 rounded-full bg-[#d0612d]" />}
        </span>
      ))}
    </nav>
  );
}

function TabItem({ label, children }: { label: string; children: ReactNode }) {
  return (
    <div className="flex w-[201.300px] flex-col items-center text-[35px] leading-none text-[#666]">
      <svg className="mt-[8px] h-[60px] w-[66px]" viewBox="0 0 66 60" fill="none" stroke="#666" strokeWidth="3" strokeLinecap="round" strokeLinejoin="round">
        {children}
      </svg>
      <span className="mt-[17px]">{label}</span>
    </div>
  );
}

function BottomBar() {
  return (
    <footer className="flex h-[177px] border-t-2 border-[#d8d8da] bg-[#f6f7f9]">
      <div className="w-[275px] text-[#4a9c2f]">
        <svg className="mt-[8px] ml-[127px] h-[8px] w-[22px]" viewBox="0 0 22 8"><path d="M11 0l11 8H0z" fill="#777" /></svg>
        <div className="mt-[10px] pl-[2px] text-center text-[39.500px] leading-none">3635.13</div>
        <div className="mt-[10px] flex justify-between pr-[4px] pl-[41px] text-[36px] leading-none">
          <span className="text-[#666]">上证</span>
          <span>-0.12%</span>
        </div>
      </div>
      <TabItem label="交易">
        <path d="M17 8.500A27 27 0 0 1 57 41l-1 3 5-3.500M49 51.500A27 27 0 0 1 9 19l1-3-8 3.500" />
        <path d="M26 17l7 9 7-9M33 26v17M24 27h18M24 36h18" />
      </TabItem>
      <TabItem label="发帖">
        <path d="M43 3.500H13q-6 0-6 6v42q0 6 6 6h41q6 0 6-6V21" />
        <path d="M52.500 12.500L33 32.500q-4 4-5.500 8 4.500-1 8-5L56 15.500z" fill="#666" strokeWidth="1.500" />
        <path d="M59 6.500l-1 1" strokeWidth="6" />
      </TabItem>
      <TabItem label="功能">
        <rect x="8" y="5" width="22" height="23" rx="4" />
        <rect x="8" y="34" width="22" height="23" rx="4" />
        <rect x="36" y="34" width="22" height="23" rx="4" />
        <path d="M45.500 4.500q1.500-1.500 3 0L58.500 15q1.500 1.700 0 3.400L48.500 29q-1.500 1.500-3 0L35.500 18.400q-1.500-1.700 0-3.400z" />
      </TabItem>
      <TabItem label="设自选">
        <circle cx="33" cy="30" r="27" />
        <path d="M21.500 30h.01M33 30h.01M44.500 30h.01" strokeWidth="6" />
      </TabItem>
    </footer>
  );
}

export default function App() {
  return (
    <main className="h-[2400px] w-[1080px] overflow-hidden bg-white font-['Noto_Sans_CJK_SC',sans-serif]">
      <StatusBar />
      <Header />
      <div className="flex h-[120px] items-center justify-between bg-[#fbeee6] pr-[45px] pl-[36px] text-[#d0622f]">
        <p className="pb-1 text-[42px] leading-none whitespace-nowrap">一键开通科创成长层权限！把握打新、交易机会</p>
        <Cross className="h-[32px] w-[32px]" />
      </div>
      <QuotePanel />
      <Notice />
      <PeriodTabs />
      <AverageBar />
      <PriceChart />
      <VolumeBar />
      <VolumeChart />
      <Promo />
      <SectionTabs />
      <div className="flex h-[34px] justify-between overflow-hidden pt-[12px] pr-[29px] pl-[36px]">
        <div className="h-[60px] w-[498px] rounded-3xl bg-linear-to-r from-[#fdf5f1] from-58% to-[#fbf0ed] to-58%" />
        <div className="h-[60px] w-[498px] rounded-3xl bg-linear-to-r from-[#fdf5f1] from-52% to-[#fcefee] to-52%" />
      </div>
      <BottomBar />
    </main>
  );
}
